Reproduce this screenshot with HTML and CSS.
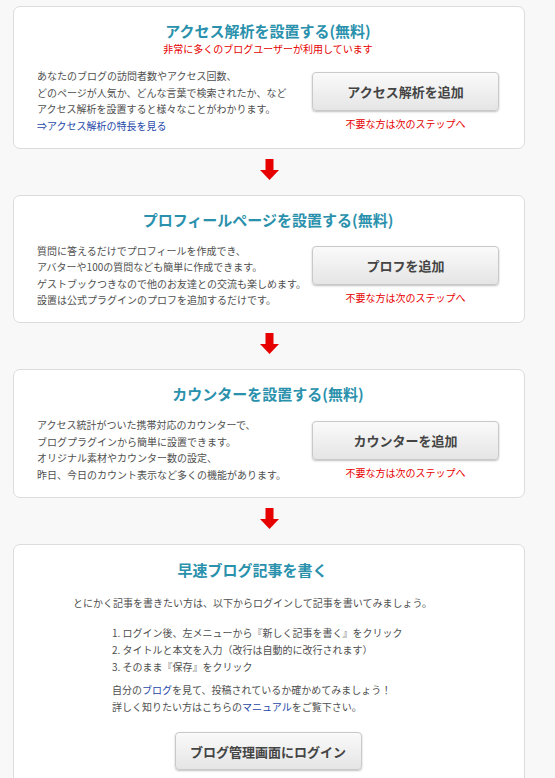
FILE: index.html
```html
<!DOCTYPE html>
<html lang="ja">
<head>
  <meta charset="UTF-8" />
  <title>ブログをはじめよう</title>
  <link rel="stylesheet" href="styles.css">
</head>
<body>
  <div class="steps">

    <div class="card">
      <h2 class="card-title">アクセス解析を設置する(無料)</h2>
      <p class="card-sub">非常に多くのブログユーザーが利用しています</p>
      <div class="row row-tight">
        <p class="desc">
          あなたのブログの訪問者数やアクセス回数、<br>
          どのページが人気か、どんな言葉で検索されたか、など<br>
          アクセス解析を設置すると様々なことがわかります。<br>
          <a href="#">⇒アクセス解析の特長を見る</a>
        </p>
        <div class="action">
          <button class="btn">アクセス解析を追加</button>
          <p class="skip">不要な方は次のステップへ</p>
        </div>
      </div>
    </div>

    <div class="arrow">
      <svg width="19" height="21" viewBox="0 0 19 21"><rect x="5.5" y="0" width="8" height="12" /><polygon points="0,11 19,11 9.5,21" /></svg>
    </div>

    <div class="card">
      <h2 class="card-title">プロフィールページを設置する(無料)</h2>
      <div class="row">
        <p class="desc">
          質問に答えるだけでプロフィールを作成でき、<br>
          アバターや100の質問なども簡単に作成できます。<br>
          ゲストブックつきなので他のお友達との交流も楽しめます。<br>
          設置は公式プラグインのプロフを追加するだけです。
        </p>
        <div class="action">
          <button class="btn">プロフを追加</button>
          <p class="skip">不要な方は次のステップへ</p>
        </div>
      </div>
    </div>

    <div class="arrow">
      <svg width="19" height="21" viewBox="0 0 19 21"><rect x="5.5" y="0" width="8" height="12" /><polygon points="0,11 19,11 9.5,21" /></svg>
    </div>

    <div class="card">
      <h2 class="card-title">カウンターを設置する(無料)</h2>
      <div class="row">
        <p class="desc">
          アクセス統計がついた携帯対応のカウンターで、<br>
          ブログプラグインから簡単に設置できます。<br>
          オリジナル素材やカウンター数の設定、<br>
          昨日、今日のカウント表示など多くの機能があります。
        </p>
        <div class="action">
          <button class="btn">カウンターを追加</button>
          <p class="skip">不要な方は次のステップへ</p>
        </div>
      </div>
    </div>

    <div class="arrow">
      <svg width="19" height="21" viewBox="0 0 19 21"><rect x="5.5" y="0" width="8" height="12" /><polygon points="0,11 19,11 9.5,21" /></svg>
    </div>

    <div class="card card-last">
      <div class="intro">
        <h2 class="card-title">早速ブログ記事を書く</h2>
        <p class="lead">とにかく記事を書きたい方は、以下からログインして記事を書いてみましょう。</p>
      </div>
      <div class="guide">
        <ol class="howto">
          <li>ログイン後、左メニューから『新しく記事を書く』をクリック</li>
          <li>タイトルと本文を入力（改行は自動的に改行されます）</li>
          <li>そのまま『保存』をクリック</li>
        </ol>
        <p class="note">
          自分の<a href="#">ブログ</a>を見て、投稿されているか確かめてみましょう！<br>
          詳しく知りたい方はこちらの<a href="#">マニュアル</a>をご覧下さい。
        </p>
      </div>
      <div class="login">
        <button class="btn">ブログ管理画面にログイン</button>
      </div>
    </div>

  </div>
</body>
</html>
```

FILE: styles.css
```css
:root {
  --page-bg: #f8f8f8;
  --card-bg: #fff;
  --card-border: #dcdcdc;
  --title: #2a91ad;
  --text: #4f4f4f;
  --red: #e60000;
  --link: #2447a8;
}

body {
  margin: 0;
  background: var(--page-bg);
  color: var(--text);
  font-family: "Noto Sans CJK JP", "Noto Sans", sans-serif;
  font-size: 10px;
  line-height: 16.5px;
}

p {
  margin: 0;
}

a {
  color: var(--link);
  text-decoration: none;
}

.steps {
  width: 512px;
  padding: 6px 0 0 13px;
}

/* Cards */
.card {
  background: var(--card-bg);
  border: 1px solid var(--card-border);
  border-radius: 7px;
  padding: 14px 25px 13.5px 23px;
}

.card-title {
  margin: 0;
  color: var(--title);
  font-size: 15px;
  line-height: 19px;
  font-weight: bold;
  text-align: center;
}

.card-sub {
  margin-top: 2px;
  color: var(--red);
  line-height: 14px;
  text-align: center;
}

.row {
  display: flex;
  align-items: center;
  justify-content: space-between;
  margin-top: 14px;
}
.row-tight {
  margin-top: 12px;
}

.desc {
  flex: 1;
}

.action {
  width: 187px;
  text-align: center;
}

.btn {
  width: 187px;
  height: 39px;
  border: 1px solid #c9c9c9;
  border-radius: 4px;
  background: linear-gradient(#fafafa, #e5e5e5);
  box-shadow: 0 1px 2px rgba(0, 0, 0, 0.25);
  color: #444;
  font-family: inherit;
  font-size: 13px;
  font-weight: bold;
  cursor: pointer;
}
.btn:hover {
  background: linear-gradient(#fff, #ececec);
}

.skip {
  margin-top: 6px;
  color: var(--red);
  line-height: 14px;
}

/* Arrows between steps */
.arrow {
  display: flex;
  justify-content: center;
  height: 21px;
  margin: 10px 0 15px;
}
.arrow svg {
  fill: var(--red);
}

/* Last step */
.card-last {
  padding-top: 15px;
}

.intro {
  padding-right: 31px;
  text-align: center;
}

.lead {
  margin-top: 16px;
}

.guide {
  margin: 13px 0 0 75px;
}

.howto {
  margin: 0;
  padding: 0;
  list-style: decimal inside;
  line-height: 17px;
}

.note {
  margin-top: 7px;
}

.login {
  display: flex;
  justify-content: center;
  margin-top: 17px;
}
.login .btn {
  height: 38px;
}
```
